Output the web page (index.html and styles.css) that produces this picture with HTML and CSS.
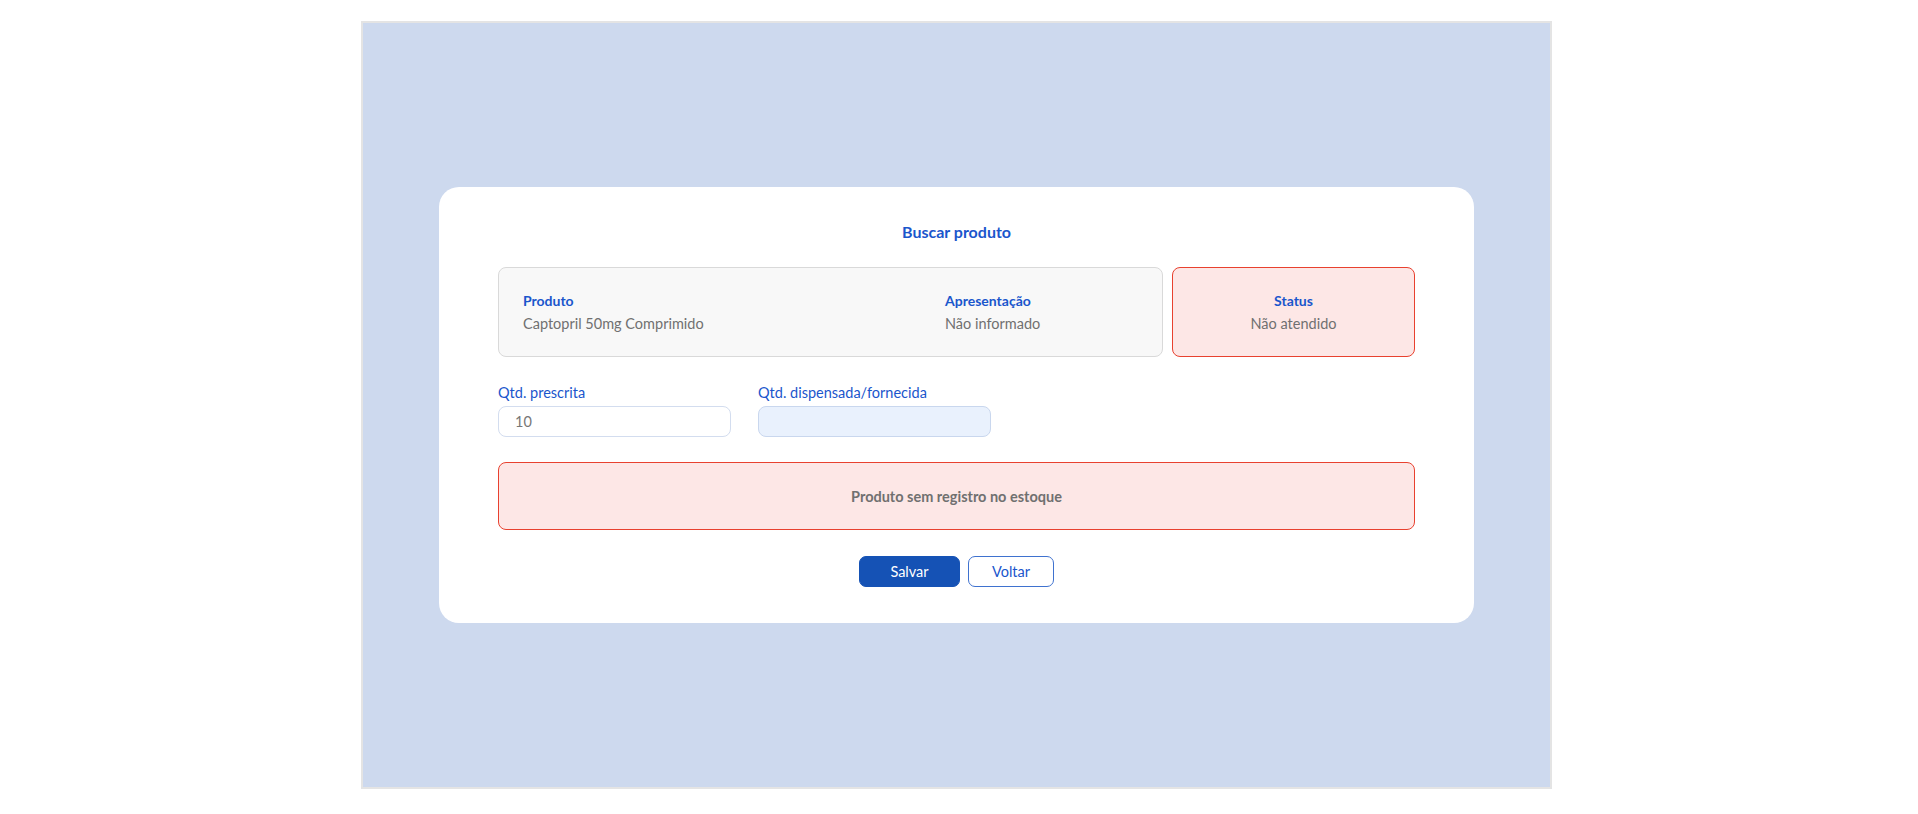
FILE: index.html
```html
<!DOCTYPE html>
<html lang="pt-BR">
<head>
  <meta charset="UTF-8" />
  <meta name="viewport" content="width=device-width, initial-scale=1.0" />
  <title>Buscar produto</title>
  <link rel="stylesheet" href="styles.css">
</head>
<body>
  <div class="frame">
    <div class="card">
      <div class="title">Buscar produto</div>

      <div class="info-row">
        <div class="info-box">
          <div class="info-col">
            <div class="info-label">Produto</div>
            <div class="info-value">Captopril 50mg Comprimido</div>
          </div>
          <div class="info-col">
            <div class="info-label">Apresentação</div>
            <div class="info-value">Não informado</div>
          </div>
        </div>
        <div class="status-box">
          <div class="info-label">Status</div>
          <div class="info-value">Não atendido</div>
        </div>
      </div>

      <div class="fields">
        <div class="field">
          <label for="qtd-prescrita">Qtd. prescrita</label>
          <input type="text" id="qtd-prescrita" value="10" readonly />
        </div>
        <div class="field">
          <label for="qtd-dispensada">Qtd. dispensada/fornecida</label>
          <input type="text" id="qtd-dispensada" class="input-filled" />
        </div>
      </div>

      <div class="alert">Produto sem registro no estoque</div>

      <div class="btn-row">
        <button class="btn-save">Salvar</button>
        <button class="btn-back">Voltar</button>
      </div>
    </div>
  </div>
</body>
</html>
```

FILE: styles.css
```css
body {
  margin: 0;
  font-family: Lato, "Noto Sans", sans-serif;
  background: #fff;
  color: #6f6f6f;
}
.frame {
  width: 1187px;
  height: 764px;
  margin: 21px 0 0 361px;
  background: #cdd9ee;
  border: 2px solid #e4e4e4;
  display: flex;
  align-items: center;
  justify-content: center;
}
.card {
  width: 917px;
  padding: 35px 59px 36px;
  background: #fff;
  border-radius: 20px;
}
.title {
  text-align: center;
  font-size: 16px;
  line-height: 20px;
  font-weight: 700;
  color: #1a56cc;
  margin-bottom: 25px;
}
.info-row {
  display: flex;
  gap: 9px;
  height: 90px;
}
.info-box {
  flex: 1;
  display: grid;
  grid-template-columns: 422px 1fr;
  padding: 23px 24px 25px;
  background: #f8f8f8;
  border: 1px solid #d9d9d9;
  border-radius: 8px;
}
.status-box {
  width: 243px;
  box-sizing: border-box;
  padding: 23px 10px 25px;
  text-align: center;
  background: #fde7e6;
  border: 1px solid #e8412f;
  border-radius: 8px;
}
.info-label {
  font-size: 14px;
  line-height: 20px;
  font-weight: 700;
  color: #1a56cc;
}
.info-value {
  font-size: 14.5px;
  line-height: 20px;
  margin-top: 3px;
  color: #707070;
}
.fields {
  display: flex;
  gap: 27px;
  margin-top: 26px;
}
.field label {
  display: block;
  font-size: 14.5px;
  line-height: 20px;
  color: #1a56cc;
  margin-bottom: 3px;
}
.field input {
  display: block;
  width: 233px;
  height: 31px;
  box-sizing: border-box;
  padding: 0 16px;
  font-family: inherit;
  font-size: 14.5px;
  color: #777;
  background: #fff;
  border: 1px solid #d3ddef;
  border-radius: 8px;
  outline: none;
}
.field .input-filled {
  background: #e9f1fd;
  border-color: #c9d7ee;
}
.alert {
  margin-top: 25px;
  height: 68px;
  box-sizing: border-box;
  display: flex;
  align-items: center;
  justify-content: center;
  background: #fde7e6;
  border: 1px solid #e8412f;
  border-radius: 8px;
  font-size: 14.5px;
  font-weight: 700;
  color: #707070;
}
.btn-row {
  margin-top: 26px;
  display: flex;
  justify-content: center;
  gap: 8px;
}
button {
  height: 31px;
  border-radius: 7px;
  font-family: inherit;
  font-size: 14.5px;
  cursor: pointer;
}
.btn-save {
  width: 101px;
  background: #1552b5;
  border: 1px solid #1552b5;
  color: #fff;
}
.btn-back {
  width: 86px;
  background: #fff;
  border: 1px solid #3f72cf;
  color: #1a56cc;
}
```
